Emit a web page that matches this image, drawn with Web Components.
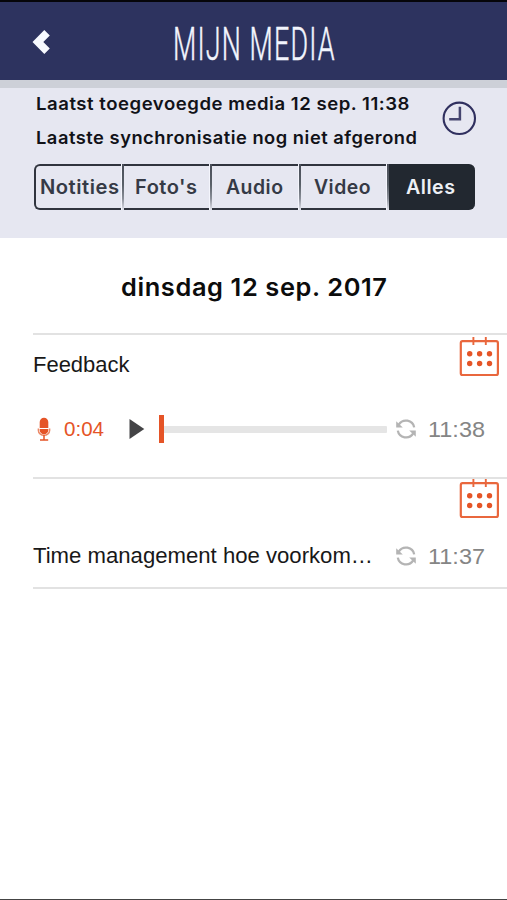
<!DOCTYPE html>
<html lang="nl">
<head>
<meta charset="utf-8">
<title>Mijn Media</title>
<style>
html,body{margin:0;padding:0;background:#fff}
body{width:507px;height:900px;overflow:hidden}
</style>
</head>
<body>
<media-app></media-app>
<script>
const define = (name, html, setup) => {
  const tpl = document.createElement('template');
  tpl.innerHTML = html;
  customElements.define(name, class extends HTMLElement {
    connectedCallback() {
      if (this.shadowRoot) return;
      const root = this.attachShadow({ mode: 'open' });
      root.append(tpl.content.cloneNode(true));
      if (setup) setup(this, root);
    }
  });
};

// One line of text spread over a given width: tracked by the "track" amount, then scaled to fit.
define('fitted-text', `<style>
  :host{display:block;white-space:nowrap;flex:none}
  span{display:inline-block;transform-origin:0 50%}
</style><span><slot></slot></span>`, (el, root) => {
  const span = root.querySelector('span');
  const width = +el.getAttribute('width');
  const track = parseFloat(el.getAttribute('track') || 0);
  span.style.letterSpacing = track + 'px';
  const natural = span.getBoundingClientRect().width - track;
  el.style.width = width + 'px';
  span.style.transform = `scaleX(${width / natural})`;
});

define('back-icon', `<style>:host{display:block;width:19px;height:26px}svg{display:block}</style>
<svg width="19" height="26" viewBox="0 0 19 26"><path d="M0.5 13 12.3 1 17.8 6.5 11.3 13 17.8 19.5 12.3 25Z" fill="#f7faff"/></svg>`);

define('clock-icon', `<style>:host{display:block;width:36px;height:36px}svg{display:block}</style>
<svg width="36" height="36" viewBox="0 0 36 36" fill="none" stroke="#30305f"><circle cx="18.3" cy="18.3" r="15.7" stroke-width="2.1"/><path d="M18.9 6.8V19.3H8.2" stroke-width="2.5" stroke="#45456f"/></svg>`);

define('calendar-icon', `<style>:host{display:block;width:40px;height:41px}svg{display:block}</style>
<svg width="40" height="41" viewBox="0 0 40 41" fill="none" stroke="#e9673d"><rect x="1.8" y="5.2" width="37.1" height="33.8" rx="1.8" stroke-width="2.2"/><path d="M14.4 1V9M26.8 1V9" stroke-width="1.9"/><g fill="#e55427" stroke="none"><circle cx="10.7" cy="17.7" r="2.7"/><circle cx="20.6" cy="17.7" r="2.7"/><circle cx="30.5" cy="17.7" r="2.7"/><circle cx="10.7" cy="27.5" r="2.7"/><circle cx="20.6" cy="27.5" r="2.7"/><circle cx="30.5" cy="27.5" r="2.7"/></g></svg>`);

define('sync-icon', `<style>:host{display:block;width:20px;height:20px;flex:none}svg{display:block}</style>
<svg width="20" height="20" viewBox="0 0 20 20"><g fill="none" stroke="#b4b4b4" stroke-width="2.3"><path d="M2.8 5.6A8.4 8.4 0 0 1 18.2 8.4"/><path d="M17.2 14.4A8.4 8.4 0 0 1 1.8 11.6"/></g><path d="M.2 2.2V8.6H6.8ZM19.8 17.8V11.4H13.2Z" fill="#b4b4b4"/></svg>`);

define('mic-icon', `<style>:host{display:block;width:14px;height:24px;flex:none}svg{display:block}</style>
<svg width="14" height="24" viewBox="0 0 14 24"><path d="M2.7 11V5a4.3 4.3 0 0 1 8.6 0V11Z" fill="#e55427"/><path d="M2.7 12H11.3V13.2a4.3 4 0 0 1-8.6 0Z" fill="#e55427"/><path d="M1.4 11.5V13.6a5.6 4.6 0 0 0 11.2 0V11.5" fill="none" stroke="#ec8967" stroke-width="1.5"/><path d="M7 18V22.6M3 23H11.2" fill="none" stroke="#e55427" stroke-width="1.5"/></svg>`);

define('app-header', `<style>
  :host{display:grid;grid-template-columns:32px 141px 1fr;height:78px;background:#2d335f;border-top:2px solid #050509;color:#f2f5fd;box-sizing:content-box}
  back-icon{grid-column:2;margin-top:27px}
  .t{font:300 46.2px/84px Roboto,sans-serif;height:78px;-webkit-text-stroke:.5px #f2f5fd}
</style><back-icon></back-icon><div class="t"><slot></slot></div>`);

define('segment-item', `<style>
  :host{display:flex;flex:none;width:20%;box-sizing:border-box;justify-content:center;border:solid #30343e;border-width:2px 0;position:relative;color:#353a46;font:600 19.6px/43px Inter,sans-serif}
  :host(:not(:first-child))::before{content:"";width:2px;position:absolute;left:-1px;top:-2px;bottom:-2px;background:linear-gradient(#4a4e59,#596068 45%,#8b8f99 75%,#e2e3ec);border-left:1px solid #f4f5fc}
  :host(:first-child){border-left-width:2px;border-radius:6px 0 0 6px}
  :host([active]){background:#222830;border-color:#222830;border-radius:0 6px 6px 0;color:#edf0f5}
</style><slot></slot>`);

define('sync-panel', `<style>
  :host{display:block;height:158px;box-sizing:border-box;border-top:8px solid #cdd0d8;background:#e6e7f1;padding:0 32px 0 34px;color:#111218;font:600 17.6px/34px Inter,sans-serif}
  .info{display:flex;justify-content:space-between;height:76px}
  .lines{padding:0 0 0 1.5px;margin-top:-1.5px}
  clock-icon{margin:12px -2px 0 0}
  .seg{display:flex;height:46px}
</style>
<div class="info"><div class="lines"><fitted-text track=".5" width="373.5">Laatst toegevoegde media 12 sep. 11:38</fitted-text><fitted-text track=".5" width="381">Laatste synchronisatie nog niet afgerond</fitted-text></div><clock-icon></clock-icon></div>
<div class="seg">
<segment-item><fitted-text track=".5" width="79">Notities</fitted-text></segment-item>
<segment-item><fitted-text track=".5" width="62">Foto's</fitted-text></segment-item>
<segment-item><fitted-text track=".5" width="57">Audio</fitted-text></segment-item>
<segment-item><fitted-text track=".5" width="56.5">Video</fitted-text></segment-item>
<segment-item active><fitted-text track=".5" width="49">Alles</fitted-text></segment-item>
</div>`);

define('day-heading', `<style>
  :host{display:flex;justify-content:center;height:95px;box-sizing:border-box;padding-left:1px;color:#0c0c0c;font:600 24.8px/98px Inter,sans-serif}
</style><slot></slot>`);

define('audio-player', `<style>
  :host{display:flex;align-items:center;height:30px;width:350px;margin-left:4px;color:#e55427;font:20.7px/30px "Liberation Sans",sans-serif}
  mic-icon{margin:-1px 13px 0 0}
  .play{margin-left:25px;display:block;flex:none}
  .track{flex:1;display:flex;align-items:center;margin-left:14px}
  .thumb{width:5px;height:28px;background:#e55427}
  .bar{flex:1;height:7px;background:#e5e5e5;border-radius:0 1px 1px 0}
</style><mic-icon></mic-icon><slot></slot>
<svg class="play" width="16" height="20" viewBox="0 0 16 20"><path d="M.5 0 15.3 10 .5 20Z" fill="#444446"/></svg>
<div class="track"><div class="thumb"></div><div class="bar"></div></div>`);

define('media-row', `<style>
  :host{display:block;box-sizing:border-box;margin-left:33px;border-top:2px solid #e2e2e2;position:relative;color:#181818;font:21.6px/30px "Liberation Sans",sans-serif}
  calendar-icon{position:absolute;right:8px;top:var(--calendar-top,1px)}
  .line{display:flex;align-items:center;height:30px;margin-top:var(--line-top,34px)}
  .main{width:354px}
  sync-icon{margin:0 12px 0 9px}
  .time{color:#858585;font-size:22.8px}
</style><calendar-icon></calendar-icon><slot name="title"></slot>
<div class="line"><div class="main"><slot></slot></div><sync-icon></sync-icon><div class="time"><slot name="time"></slot></div></div>`);

define('media-app', `<style>
  :host{display:flex;flex-direction:column;width:507px;height:900px;box-sizing:border-box;background:#fff;border-bottom:1px solid #444}
  .title{margin:15px 0 0}
  .first{height:144px}
  .second{height:110px;--line-top:62px;--calendar-top:-1px}
  .end{height:2px;margin-left:33px;background:#e2e2e2}
</style>
<app-header><fitted-text track="2" width="161.5">MIJN MEDIA</fitted-text></app-header>
<sync-panel></sync-panel>
<day-heading><fitted-text track=".6" width="266">dinsdag 12 sep. 2017</fitted-text></day-heading>
<media-row class="first">
  <fitted-text slot="title" class="title" width="96.5">Feedback</fitted-text>
  <audio-player><fitted-text width="40">0:04</fitted-text></audio-player>
  <fitted-text slot="time" width="57">11:38</fitted-text>
</media-row>
<media-row class="second">
  <fitted-text width="340">Time management hoe voorkom…</fitted-text>
  <fitted-text slot="time" width="57">11:37</fitted-text>
</media-row>
<div class="end"></div>`);
</script>
</body>
</html>
